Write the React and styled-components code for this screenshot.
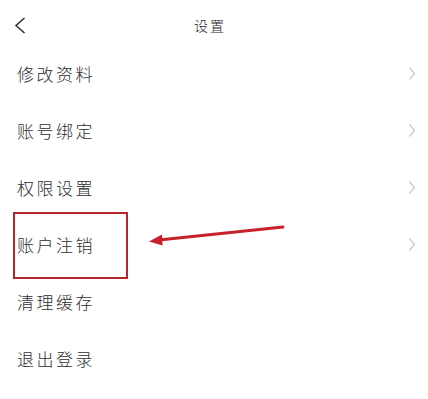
import styled, { createGlobalStyle } from "styled-components";

const GlobalStyle = createGlobalStyle`
  html, body {
    margin: 0;
    padding: 0;
    background: #fff;
  }
  body {
    font-family: "Noto Sans CJK SC", "Noto Sans", sans-serif;
  }
`;

const items = [
  { label: "修改资料", arrow: true },
  { label: "账号绑定", arrow: true },
  { label: "权限设置", arrow: true },
  { label: "账户注销", arrow: true, marked: true },
  { label: "清理缓存" },
  { label: "退出登录" },
];

function App() {
  return (
    <Page>
      <GlobalStyle />
      <Header>
        <BackBtn>
          <svg width="12" height="17" viewBox="0 0 12 17">
            <path d="M10.5 1 L2 8.5 L10.5 16" fill="none" stroke="#333" strokeWidth="1.6" />
          </svg>
        </BackBtn>
        <Title>设置</Title>
        <span />
      </Header>
      <List>
        {items.map((item) => (
          <Row key={item.label}>
            <Label>{item.label}</Label>
            {item.arrow && (
              <svg width="8" height="15" viewBox="0 0 8 15">
                <path d="M1.5 1.5 L6.5 7.5 L1.5 13.5" fill="none" stroke="#cbcbcb" strokeWidth="1.3" />
              </svg>
            )}
            {item.marked && <MarkBox />}
          </Row>
        ))}
      </List>
      <Pointer width="140" height="22" viewBox="0 0 140 22">
        <path d="M136 3 L12 16" stroke="#c7212b" strokeWidth="3" strokeLinecap="round" />
        <path d="M2 17.5 L15 10.5 L15.5 21.5 Z" fill="#c7212b" />
      </Pointer>
    </Page>
  );
}
export default App;

const Page = styled.div`
  position: relative;
  width: 428px;
  height: 399px;
  background: #fff;
  overflow: hidden;
`;

const Header = styled.div`
  height: 45px;
  display: grid;
  grid-template-columns: 1fr auto 1fr;
  align-items: center;
`;

const BackBtn = styled.div`
  display: flex;
  padding: 6px 0 0 14px;
`;

const Title = styled.div`
  font-size: 14px;
  font-weight: 300;
  color: #222;
  letter-spacing: 2px;
  margin-right: 8px;
  padding-top: 4px;
`;

const List = styled.div`
  display: flex;
  flex-direction: column;
`;

const Row = styled.div`
  position: relative;
  height: 57px;
  display: flex;
  align-items: center;
  justify-content: space-between;
  padding: 0 12px 0 17px;
`;

const Label = styled.span`
  font-size: 17px;
  font-weight: 300;
  color: #2e2e2e;
  letter-spacing: 2.5px;
`;

const MarkBox = styled.div`
  position: absolute;
  left: 13px;
  top: -4px;
  width: 115px;
  height: 67px;
  box-sizing: border-box;
  border: 2.5px solid #b9252d;
`;

const Pointer = styled.svg`
  position: absolute;
  left: 147px;
  top: 224px;
`;
